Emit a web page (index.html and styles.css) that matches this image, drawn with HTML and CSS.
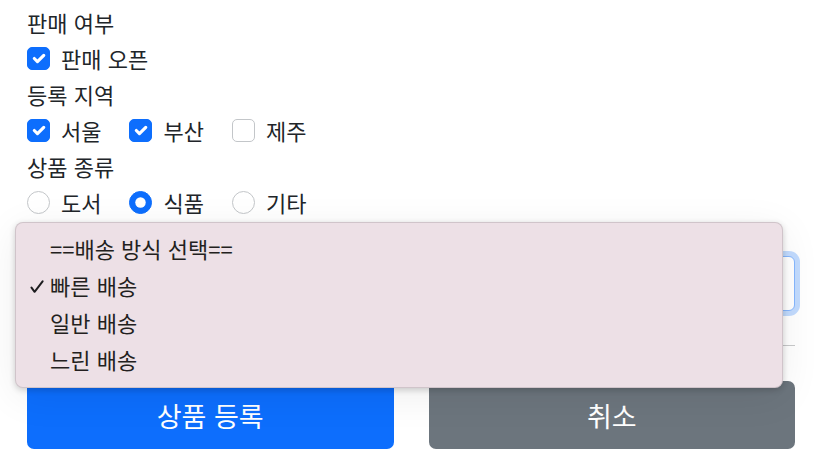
FILE: index.html
```html
<!DOCTYPE html>
<html lang="ko">
<head>
  <meta charset="UTF-8">
  <meta name="viewport" content="width=device-width, initial-scale=1.0">
  <title>상품 등록</title>
  <link rel="stylesheet" href="styles.css">
</head>
<body>
  <form class="item-form">
    <div class="field-label">판매 여부</div>
    <div class="check-row">
      <label class="check-item">
        <input type="checkbox" class="check-input" checked>
        <span>판매 오픈</span>
      </label>
    </div>

    <div class="field-label">등록 지역</div>
    <div class="check-row">
      <label class="check-item">
        <input type="checkbox" class="check-input" checked>
        <span>서울</span>
      </label>
      <label class="check-item">
        <input type="checkbox" class="check-input" checked>
        <span>부산</span>
      </label>
      <label class="check-item">
        <input type="checkbox" class="check-input">
        <span>제주</span>
      </label>
    </div>

    <div class="field-label">상품 종류</div>
    <div class="check-row">
      <label class="check-item">
        <input type="radio" name="itemType" class="check-input">
        <span>도서</span>
      </label>
      <label class="check-item">
        <input type="radio" name="itemType" class="check-input" checked>
        <span>식품</span>
      </label>
      <label class="check-item">
        <input type="radio" name="itemType" class="check-input">
        <span>기타</span>
      </label>
    </div>

    <select class="delivery-select is-focused">
      <option value="">==배송 방식 선택==</option>
      <option value="FAST" selected>빠른 배송</option>
      <option value="NORMAL">일반 배송</option>
      <option value="SLOW">느린 배송</option>
    </select>

    <hr class="divider">

    <div class="button-row">
      <button type="submit" class="btn btn-primary">상품 등록</button>
      <button type="button" class="btn btn-secondary">취소</button>
    </div>

    <!-- open native select popup -->
    <ul class="select-popup">
      <li class="popup-item">==배송 방식 선택==</li>
      <li class="popup-item selected">
        <svg class="popup-check" viewBox="0 0 14 14" width="14" height="14">
          <path d="M1.5 7.6 L4.6 11.8 L12.6 1.4" fill="none" stroke="#1d1d1f" stroke-width="2" stroke-linecap="round" stroke-linejoin="round"/>
        </svg>
        빠른 배송
      </li>
      <li class="popup-item">일반 배송</li>
      <li class="popup-item">느린 배송</li>
    </ul>
  </form>
</body>
</html>
```

FILE: styles.css
```css
body {
  margin: 0;
  padding: 0;
  font-family: "Noto Sans CJK KR", "Noto Sans", sans-serif;
  font-size: 22px;
  color: #212529;
  background-color: #fff;
}

.item-form {
  position: relative;
  width: 768px;
  margin: 0;
  padding: 4px 0 0 27px;
}

.field-label {
  height: 36px;
  line-height: 36px;
}

.check-row {
  display: flex;
  align-items: center;
  height: 36px;
}

.check-item {
  display: flex;
  align-items: center;
  gap: 11px;
  margin-right: 28px;
  line-height: 36px;
}

.check-input {
  appearance: none;
  -webkit-appearance: none;
  margin: 0;
  width: 23px;
  height: 23px;
  border: 1px solid #c3c6c9;
  background-color: #fff;
  background-repeat: no-repeat;
  background-position: center;
  background-size: contain;
  flex-shrink: 0;
}

.check-input[type="checkbox"] {
  border-radius: 5px;
}

.check-input[type="radio"] {
  border-radius: 50%;
}

.check-input:checked {
  background-color: #0d6efd;
  border-color: #0d6efd;
}

.check-input[type="checkbox"]:checked {
  background-image: url("data:image/svg+xml,%3csvg xmlns='http://www.w3.org/2000/svg' viewBox='0 0 20 20'%3e%3cpath fill='none' stroke='%23fff' stroke-linecap='round' stroke-linejoin='round' stroke-width='3' d='m6 10 3 3 6-6'/%3e%3c/svg%3e");
}

.check-input[type="radio"]:checked {
  background-image: url("data:image/svg+xml,%3csvg xmlns='http://www.w3.org/2000/svg' viewBox='-4 -4 8 8'%3e%3ccircle r='2' fill='%23fff'/%3e%3c/svg%3e");
}

.delivery-select {
  display: block;
  width: 768px;
  height: 55px;
  margin-top: 36px;
  padding: 0 16px;
  font-family: inherit;
  font-size: 22px;
  color: #212529;
  background-color: #fff;
  border: 1px solid #ced4da;
  border-radius: 6px;
  appearance: none;
  -webkit-appearance: none;
}

.delivery-select.is-focused {
  border-color: #86b7fe;
  box-shadow: 0 0 0 5px rgba(13, 110, 253, 0.25);
}

.divider {
  margin: 34px 0 0;
  border: 0;
  border-top: 1px solid #c8c9ca;
}

.button-row {
  display: grid;
  grid-template-columns: 1fr 1fr;
  gap: 35px;
  margin-top: 35px;
}

.btn {
  height: 68px;
  border: 0;
  border-radius: 7px;
  font-family: inherit;
  font-size: 27px;
  color: #fff;
  cursor: pointer;
}

.btn-primary {
  background-color: #0d6efd;
}

.btn-secondary {
  background-color: #6c757d;
}

/* open select menu, drawn over the form */
.select-popup {
  position: absolute;
  left: 15px;
  top: 222px;
  width: 768px;
  box-sizing: border-box;
  margin: 0;
  padding: 7px 0 9px;
  list-style: none;
  background-color: #ede0e6;
  border: 1px solid rgba(0, 0, 0, 0.12);
  border-radius: 8px;
  box-shadow: 0 2px 6px rgba(0, 0, 0, 0.18), 0 8px 40px rgba(0, 0, 0, 0.07);
}

.popup-item {
  position: relative;
  height: 37px;
  line-height: 37px;
  padding-left: 34px;
  font-size: 22px;
  color: #231f20;
}

.popup-check {
  position: absolute;
  left: 14px;
  top: 13px;
}
```
